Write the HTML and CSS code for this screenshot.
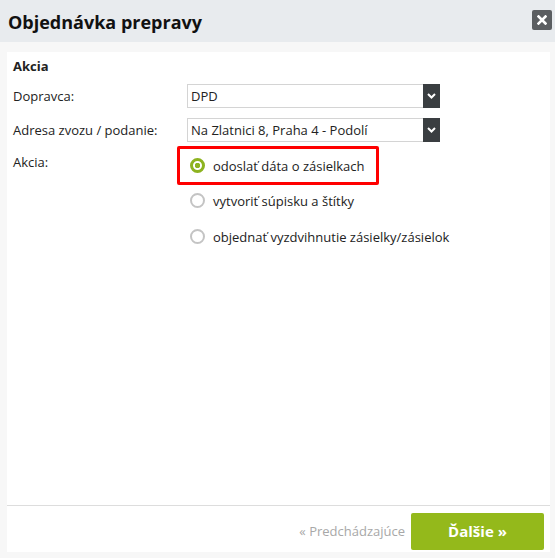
FILE: index.html
```html
<!DOCTYPE html>
<html lang="sk">
<head>
<meta charset="utf-8">
<title>Objednávka prepravy</title>
<link rel="stylesheet" href="styles.css">
</head>
<body>
<div class="dialog">
  <div class="header">
    <h1 class="title">Objednávka prepravy</h1>
    <button class="close" aria-label="Zavrieť">
      <svg width="10" height="10" viewBox="0 0 10 10"><path d="M1.5 1.5 L8.5 8.5 M8.5 1.5 L1.5 8.5" stroke="#fff" stroke-width="2.6" stroke-linecap="square"/></svg>
    </button>
  </div>
  <div class="body">
    <div class="panel">
      <div class="content">
        <div class="section-title">Akcia</div>
        <div class="row">
          <div class="label">Dopravca:</div>
          <div class="select"><span class="select-text">DPD</span><span class="arrow"><svg width="9" height="6" viewBox="0 0 9 6"><path d="M1 1 L4.5 4.5 L8 1" stroke="#fff" stroke-width="2" fill="none"/></svg></span></div>
        </div>
        <div class="row">
          <div class="label">Adresa zvozu / podanie:</div>
          <div class="select"><span class="select-text">Na Zlatnici 8, Praha 4 - Podolí</span><span class="arrow"><svg width="9" height="6" viewBox="0 0 9 6"><path d="M1 1 L4.5 4.5 L8 1" stroke="#fff" stroke-width="2" fill="none"/></svg></span></div>
        </div>
        <div class="row row-radios">
          <div class="label label-akcia">Akcia:</div>
          <div class="radios">
            <div class="radio-item highlighted"><span class="radio checked"></span><span>odoslať dáta o zásielkach</span></div>
            <div class="radio-item"><span class="radio"></span><span>vytvoriť súpisku a štítky</span></div>
            <div class="radio-item"><span class="radio"></span><span>objednať vyzdvihnutie zásielky/zásielok</span></div>
          </div>
        </div>
      </div>
      <div class="footer">
        <span class="prev">« Predchádzajúce</span>
        <button class="next">Ďalšie »</button>
      </div>
    </div>
  </div>
</div>
</body>
</html>
```
FILE: styles.css
```css
* { box-sizing: border-box; }
html, body { margin: 0; padding: 0; }
body {
  font-family: "Open Sans", "Liberation Sans", sans-serif;
  font-size: 13px;
  color: #222;
  background: #f7f7f7;
  width: 555px;
  height: 558px;
  overflow: hidden;
}
.dialog { display: flex; flex-direction: column; height: 558px; }
.header {
  height: 42px;
  background: #e8ebee;
  display: flex;
  align-items: center;
  justify-content: space-between;
  padding: 0 3px 0 8px;
}
.title {
  margin: 0;
  font-size: 18px;
  font-weight: 700;
  color: #111;
  line-height: 1;
  padding-top: 1px;
}
.close {
  width: 20px;
  height: 20px;
  border: 0;
  padding: 0;
  background: #5b5e61;
  border-radius: 2px;
  display: flex;
  align-items: center;
  justify-content: center;
  margin-bottom: 3px;
}
.body {
  flex: 1;
  padding: 10px 5px 6px 7px;
  display: flex;
}
.panel {
  flex: 1;
  background: #fff;
  display: flex;
  flex-direction: column;
}
.content { flex: 1; padding: 5px 6px 0 6px; }
.section-title {
  font-weight: 700;
  line-height: 18px;
  margin-bottom: 9px;
}
.row { display: flex; align-items: center; margin-bottom: 10px; }
.label { width: 174px; line-height: 18px; }
.select {
  width: 253px;
  height: 24px;
  border: 1px solid #d4d4d4;
  border-right: 0;
  display: flex;
  align-items: stretch;
  background: #fff;
}
.select-text { flex: 1; padding-left: 3px; line-height: 22px; color: #222; }
.arrow {
  width: 17px;
  background: #3a3e41;
  display: flex;
  align-items: center;
  justify-content: center;
  margin: -1px 0;
}
.row-radios { align-items: flex-start; margin-top: -6px; }
.label-akcia { padding-top: 7px; }
.radios { margin-left: -10px; display: flex; flex-direction: column; }
.radio-item {
  display: flex;
  align-items: center;
  height: 39px;
  padding-left: 10px;
  margin-bottom: -3px;
  border: 3px solid transparent;
  border-radius: 2px;
  width: 202px;
  white-space: nowrap;
  color: #222;
}
.radio-item.highlighted { border-color: #f00; margin-bottom: -4px; }
.radio {
  width: 15px;
  height: 15px;
  border-radius: 50%;
  border: 2px solid #c4c4c4;
  margin-right: 8px;
  flex: none;
  background: #fff;
}
.radio.checked {
  border: 3px solid #8db320;
  background: radial-gradient(circle, #8db320 0 2.5px, #fff 3px);
}
.footer {
  height: 47px;
  border-top: 1px solid #ddd;
  display: flex;
  align-items: center;
  justify-content: flex-end;
  padding: 4px 6px 0 0;
}
.prev { color: #a8a8a8; margin-right: 6px; }
.next {
  width: 133px;
  height: 37px;
  border: 0;
  border-radius: 2px;
  background: #94b91b;
  color: #fff;
  font-family: "Open Sans", "Liberation Sans", sans-serif;
  font-size: 15px;
  font-weight: 700;
}
```
